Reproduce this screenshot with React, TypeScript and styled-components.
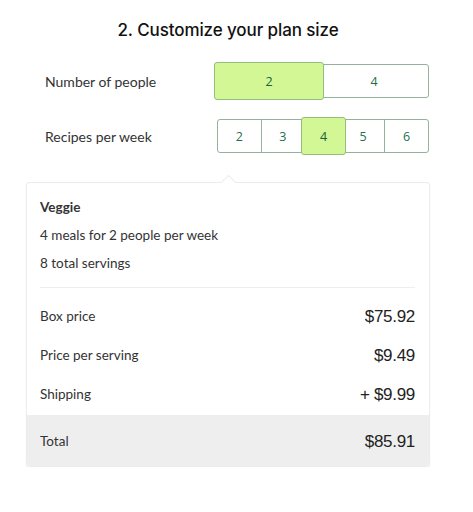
import React from "react";
import styled, { createGlobalStyle } from "styled-components";

const Global = createGlobalStyle`
  html, body { margin: 0; padding: 0; background: #fff; }
  body { font-family: "Lato", "Open Sans", sans-serif; color: #333; }
`;

const Page = styled.div`
  width: 404px;
  margin-left: 26px;
  padding-top: 18px;
  display: flex;
  flex-direction: column;
`;

const Title = styled.h2`
  margin: 0 0 20px;
  text-align: center;
  font-family: "Inter", sans-serif;
  font-weight: 500;
  font-size: 17px;
  line-height: 24px;
  color: #111;
  letter-spacing: -0.1px;
`;

const Row = styled.div<{ $gap?: number }>`
  display: flex;
  align-items: center;
  height: 38px;
  margin-bottom: ${(p) => p.$gap ?? 0}px;
`;

const Label = styled.div`
  flex: 0 0 191px;
  box-sizing: border-box;
  padding-left: 19px;
  font-size: 14px;
  color: #333;
`;

const Group = styled.div`
  flex: 0 0 212px;
  display: flex;
  height: 34px;
  border: 1px solid #93b39d;
  border-radius: 3px;
  box-sizing: border-box;
`;

const Option = styled.div<{ $active?: boolean; $last?: boolean }>`
  flex: 1 1 0;
  display: flex;
  align-items: center;
  justify-content: center;
  font-family: "Open Sans", sans-serif;
  font-size: 12.5px;
  color: #1f6f4b;
  box-sizing: border-box;
  border-right: ${(p) => (p.$last ? "none" : "1px solid #93b39d")};
  ${(p) =>
    p.$active &&
    `
    background: #d3f794;
    border: 1px solid #93be7d;
    border-radius: 3px;
    margin: -3px -4px;
    height: 38px;
    color: #17603d;
    position: relative;
    z-index: 1;
  `}
`;

const Card = styled.div`
  position: relative;
  margin-top: 27px;
  border: 1px solid #ececec;
  border-radius: 3px;
  box-shadow: 0 1px 2px rgba(0, 0, 0, 0.05);
  background: #fff;
`;

const Notch = styled.div`
  position: absolute;
  top: -6px;
  left: 196px;
  width: 10px;
  height: 10px;
  background: #fff;
  border-top: 1px solid #ececec;
  border-left: 1px solid #ececec;
  transform: rotate(45deg);
`;

const Body = styled.div`
  padding: 10px 14px 2px 13px;
`;

const Line = styled.div<{ $bold?: boolean }>`
  height: 28px;
  line-height: 28px;
  font-size: 13.5px;
  font-weight: ${(p) => (p.$bold ? 700 : 400)};
  color: #333;
`;

const Divider = styled.div`
  height: 1px;
  background: #eee;
  margin: 10px 0 8px;
`;

const PriceRow = styled.div`
  display: flex;
  align-items: center;
  justify-content: space-between;
  height: 39px;
`;

const PriceLabel = styled.span`
  font-size: 13.5px;
  color: #333;
`;

const PriceValue = styled.span`
  font-family: "Liberation Sans", Arial, sans-serif;
  font-size: 17px;
  color: #222;
  letter-spacing: -0.3px;
  padding-top: 3px;
`;

const TotalRow = styled(PriceRow)`
  height: 51px;
  background: #eeeeee;
  padding: 0 14px 0 13px;
  border-radius: 0 0 3px 3px;
`;

export default function App() {
  const people = [2, 4];
  const recipes = [2, 3, 4, 5, 6];
  return (
    <>
      <Global />
      <Page>
        <Title>2. Customize your plan size</Title>
        <Row $gap={17}>
          <Label>Number of people</Label>
          <Group>
            {people.map((n, i) => (
              <Option key={n} $active={n === 2} $last={i === people.length - 1}>
                {n}
              </Option>
            ))}
          </Group>
        </Row>
        <Row>
          <Label>Recipes per week</Label>
          <Group>
            {recipes.map((n, i) => (
              <Option key={n} $active={n === 4} $last={i === recipes.length - 1}>
                {n}
              </Option>
            ))}
          </Group>
        </Row>
        <Card>
          <Notch />
          <Body>
            <Line $bold>Veggie</Line>
            <Line>4 meals for 2 people per week</Line>
            <Line>8 total servings</Line>
            <Divider />
            <PriceRow>
              <PriceLabel>Box price</PriceLabel>
              <PriceValue>$75.92</PriceValue>
            </PriceRow>
            <PriceRow>
              <PriceLabel>Price per serving</PriceLabel>
              <PriceValue>$9.49</PriceValue>
            </PriceRow>
            <PriceRow>
              <PriceLabel>Shipping</PriceLabel>
              <PriceValue>+ $9.99</PriceValue>
            </PriceRow>
          </Body>
          <TotalRow>
            <PriceLabel>Total</PriceLabel>
            <PriceValue>$85.91</PriceValue>
          </TotalRow>
        </Card>
      </Page>
    </>
  );
}
